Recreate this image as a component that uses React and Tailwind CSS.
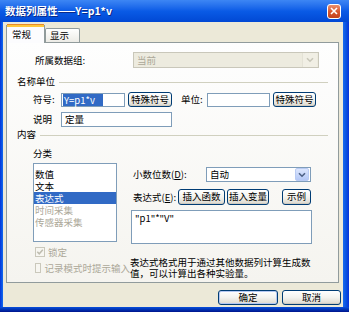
import React from 'react';

function XPButton({ children, className = '', primary = false }) {
  return (
    <div
      className={`flex shrink-0 items-center justify-center rounded-[3px] border border-[#003C74] bg-linear-to-b from-[#FFFFFF] via-[#F3F3EF] to-[#DCD8CE] text-[9.5px] leading-none text-black ${
        primary ? 'shadow-[inset_0_0_0_1px_#B4C8F2]' : 'shadow-[inset_0_-1px_0_#D0CBC0]'
      } ${className}`}
    >
      {children}
    </div>
  );
}

function Chevron({ color }) {
  return (
    <svg width="8" height="6" viewBox="0 0 8 6">
      <path d="M1 1.2 L4 4.2 L7 1.2" fill="none" stroke={color} strokeWidth="1.6" />
    </svg>
  );
}

function CheckBox({ checked, label }) {
  return (
    <div className="flex h-[10px] items-center">
      <div className="ml-[2px] flex h-[10px] w-[10px] items-center justify-center border border-[#CAC8BB] bg-[#F7F6F1]">
        {checked && (
          <svg width="8" height="8" viewBox="0 0 8 8">
            <path d="M1.3 3.8 L3.2 5.8 L6.8 1.8" fill="none" stroke="#BEBCAF" strokeWidth="1.5" />
          </svg>
        )}
      </div>
      <span className="ml-[3px] whitespace-nowrap text-[9.5px] text-[#ACA899]">{label}</span>
    </div>
  );
}

function GroupTitle({ children, className = '' }) {
  return (
    <div className={`flex h-[11px] items-center ${className}`}>
      <span className="ml-[10px] text-[9.5px] leading-none">{children}</span>
      <div className="mr-[10px] ml-[4px] mt-[2px] h-px flex-1 bg-[#D0D0BF]" />
    </div>
  );
}

export default function App() {
  return (
    <div className="flex h-[312px] w-[349px] flex-col overflow-hidden font-['Noto_Sans_CJK_SC','Noto_Sans',sans-serif] text-black">
      {/* Title bar */}
      <div className="flex h-[22px] shrink-0 items-center bg-linear-to-b from-[#3D86F4] via-[#0A5BE6] to-[#0248D4]">
        <span className="ml-[5px] text-[10.5px] font-bold leading-none text-white [text-shadow:1px_1px_0_#0A2A8A]">
          数据列属性——Y=p1*v
        </span>
        <div className="mr-[8px] ml-auto flex h-[15px] w-[14px] items-center justify-center rounded-[3px] border border-white bg-linear-to-b from-[#E8906E] via-[#D9572E] to-[#C2421C]">
          <svg width="8" height="8" viewBox="0 0 8 8">
            <path d="M1 1 L7 7 M7 1 L1 7" stroke="white" strokeWidth="1.6" />
          </svg>
        </div>
      </div>

      <div className="flex flex-1">
        <div className="w-[3px] bg-linear-to-r from-[#0831D9] to-[#166AEE]" />

        {/* Client */}
        <div className="flex flex-1 flex-col bg-[#ECE9D8]">
          {/* Tabs */}
          <div className="mt-[3px] ml-[3px] flex h-[17px] items-end">
            <div className="relative z-10 -mb-px flex h-[18px] w-[39px] flex-col border border-t-0 border-b-0 border-[#919B9C] bg-[#FCFCFE]">
              <div className="h-[2px] bg-[#FFC83C] shadow-[0_-1px_0_#E68B2C]" />
              <span className="mt-[3px] ml-[5px] text-[9.5px] leading-none">常规</span>
            </div>
            <div className="flex h-[14px] w-[35px] items-start rounded-t-[2px] border border-b-0 border-[#919B9C] bg-linear-to-b from-[#FFFFFF] to-[#ECEBE6]">
              <span className="mt-[2px] ml-[4px] text-[9.5px] leading-none">显示</span>
            </div>
          </div>

          {/* Panel */}
          <div className="ml-[3px] flex h-[241px] w-[333px] flex-col border border-[#919B9C] bg-linear-to-b from-[#FEFEFE] to-[#F5F4EF]">
            {/* 所属数据组 */}
            <div className="mt-[9px] flex h-[16px] items-center">
              <span className="ml-[28px] w-[98px] text-[9.5px]">所属数据组:</span>
              <div className="flex h-[16px] w-[186px] items-center border border-[#C9C7BA] bg-[#EDEBDF]">
                <span className="ml-[3px] text-[9.5px] text-[#ACA899]">当前</span>
                <div className="mr-px ml-auto flex h-[14px] w-[15px] items-center justify-center border-l border-[#E4E2D6] bg-[#F1EFE5]">
                  <Chevron color="#C9C7BA" />
                </div>
              </div>
            </div>

            <GroupTitle className="mt-[8px]">名称单位</GroupTitle>

            {/* 符号 / 单位 */}
            <div className="mt-[5px] flex h-[15px] items-center">
              <span className="ml-[26px] w-[28px] text-[9.5px]">符号:</span>
              <div className="flex h-[14px] w-[64px] items-center border border-[#7F9DB9] bg-white">
                <span className="ml-px w-[40px] bg-[#316AC5] pl-px text-[9.5px] leading-[12px] text-white">Y=p1*v</span>
              </div>
              <XPButton className="ml-[3px] h-[15px] w-[44px]">特殊符号</XPButton>
              <span className="ml-[9px] w-[26px] text-[9.5px]">单位:</span>
              <div className="h-[14px] w-[63px] border border-[#7F9DB9] bg-white" />
              <XPButton className="ml-[3px] h-[15px] w-[43px]">特殊符号</XPButton>
            </div>

            {/* 说明 */}
            <div className="mt-[5px] flex h-[15px] items-center">
              <span className="ml-[26px] w-[28px] text-[9.5px]">说明</span>
              <div className="flex h-[15px] w-[111px] items-center border border-[#7F9DB9] bg-white">
                <span className="ml-[3px] text-[9.5px]">定量</span>
              </div>
            </div>

            <GroupTitle className="mt-[2px]">内容</GroupTitle>

            {/* 内容 columns */}
            <div className="mt-[8px] flex items-start">
              <div className="ml-[26px] flex w-[97px] flex-col">
                <span className="h-[11px] text-[9.5px] leading-[11px]">分类</span>
                <div className="mt-[4px] flex h-[79px] w-[84px] flex-col border border-[#7F9DB9] bg-white pt-[4px] text-[9.5px]">
                  <div className="h-[12px] pl-px leading-[12px]">数值</div>
                  <div className="h-[12px] pl-px leading-[12px]">文本</div>
                  <div className="h-[12px] bg-[#316AC5] pl-px leading-[12px] text-white">表达式</div>
                  <div className="h-[12px] pl-px leading-[12px] text-[#ACA899]">时间采集</div>
                  <div className="h-[12px] pl-px leading-[12px] text-[#ACA899]">传感器采集</div>
                </div>
                <div className="mt-[5px]">
                  <CheckBox checked label="锁定" />
                </div>
                <div className="mt-[6px]">
                  <CheckBox label="记录模式时提示输入" />
                </div>
              </div>

              <div className="mt-[19px] flex w-[182px] flex-col">
                <div className="flex h-[15px] items-center">
                  <span className="ml-[3px] w-[73px] text-[9.5px]">
                    小数位数(<span className="underline">D</span>):
                  </span>
                  <div className="flex h-[15px] w-[105px] items-center border border-[#7F9DB9] bg-white">
                    <span className="ml-[3px] text-[9.5px]">自动</span>
                    <div className="mr-px ml-auto flex h-[13px] w-[14px] items-center justify-center rounded-[2px] border border-[#B9CBF3] bg-linear-to-b from-[#DCE6FD] to-[#B4C8F6]">
                      <Chevron color="#4D6185" />
                    </div>
                  </div>
                </div>

                <div className="mt-[7px] flex h-[16px] items-center">
                  <span className="ml-[3px] w-[45px] text-[9.5px]">
                    表达式(<span className="underline">E</span>):
                  </span>
                  <XPButton className="h-[16px] w-[47px]">插入函数</XPButton>
                  <XPButton className="ml-[2px] h-[16px] w-[42px]">插入变量</XPButton>
                  <XPButton className="ml-[13px] h-[16px] w-[29px]">示例</XPButton>
                </div>

                <div className="mt-[5px] ml-px h-[34px] w-[181px] border border-[#7F9DB9] bg-white">
                  <div className="mt-[2px] ml-[3px] text-[9.5px] leading-[11px]">"p1"*"V"</div>
                </div>

                <div className="mt-[13px] whitespace-nowrap text-[9.5px] leading-[11px]">
                  表达式格式用于通过其他数据列计算生成数
                  <br />
                  值，可以计算出各种实验量。
                </div>
              </div>
            </div>
          </div>

          {/* Buttons */}
          <div className="mt-[7px] flex h-[15px] justify-end pr-[2px]">
            <XPButton primary className="h-[15px] w-[60px]">确定</XPButton>
            <XPButton className="ml-[4px] h-[15px] w-[59px]">取消</XPButton>
          </div>
        </div>

        <div className="w-[6px] bg-linear-to-r from-[#166AEE] via-[#0A52E0] to-[#0831D9]" />
      </div>

      <div className="h-[5px] shrink-0 bg-linear-to-b from-[#0A4FDC] to-[#00138C]" />
    </div>
  );
}
